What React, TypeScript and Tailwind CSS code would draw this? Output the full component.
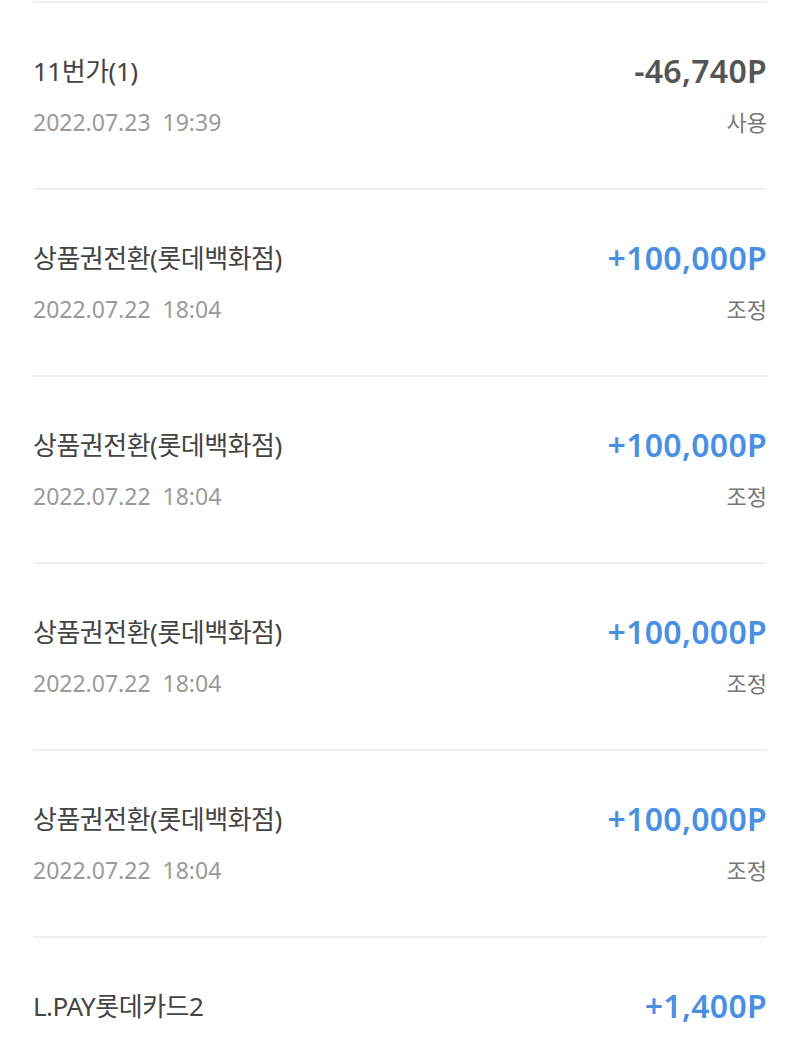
type Row = { title: string; date?: string; amount: string; kind?: string; plus: boolean };

const history: Row[] = [
  { title: "11번가(1)", date: "2022.07.23  19:39", amount: "-46,740P", kind: "사용", plus: false },
  { title: "상품권전환(롯데백화점)", date: "2022.07.22  18:04", amount: "+100,000P", kind: "조정", plus: true },
  { title: "상품권전환(롯데백화점)", date: "2022.07.22  18:04", amount: "+100,000P", kind: "조정", plus: true },
  { title: "상품권전환(롯데백화점)", date: "2022.07.22  18:04", amount: "+100,000P", kind: "조정", plus: true },
  { title: "상품권전환(롯데백화점)", date: "2022.07.22  18:04", amount: "+100,000P", kind: "조정", plus: true },
  // last row is cut by the screen edge, only its first line is visible
  { title: "L.PAY롯데카드2", amount: "+1,400P", plus: true },
];

export default function App() {
  return (
    <div
      className="h-[1039px] overflow-hidden bg-white px-[33px] pt-[1px]"
      style={{ fontFamily: '"Noto Sans", "Noto Sans CJK KR", sans-serif' }}
    >
      <div className="border-t-2 border-[#efefef]">
        {history.map((item, i) => (
          <div key={i} className="flex justify-between border-b-2 border-[#efefef] pt-[52px] pb-[50px]">
            <div className="flex flex-col gap-[19px]">
              <p className="text-[26px] leading-[32px] text-[#444444] tracking-[-0.5px]">{item.title}</p>
              {item.date && (
                <p className="text-[23px] leading-[32px] text-[#9a9a9a] whitespace-pre">{item.date}</p>
              )}
            </div>
            <div className="flex flex-col items-end gap-[19px]">
              <p
                className={
                  item.plus
                    ? "text-[32px] leading-[32px] font-semibold text-[#4a90e2] tracking-[0.3px]"
                    : "text-[32px] leading-[32px] font-semibold text-[#555555] tracking-[0.3px]"
                }
              >
                {item.amount}
              </p>
              {item.kind && <p className="text-[22px] leading-[32px] text-[#777777]">{item.kind}</p>}
            </div>
          </div>
        ))}
      </div>
    </div>
  );
}
